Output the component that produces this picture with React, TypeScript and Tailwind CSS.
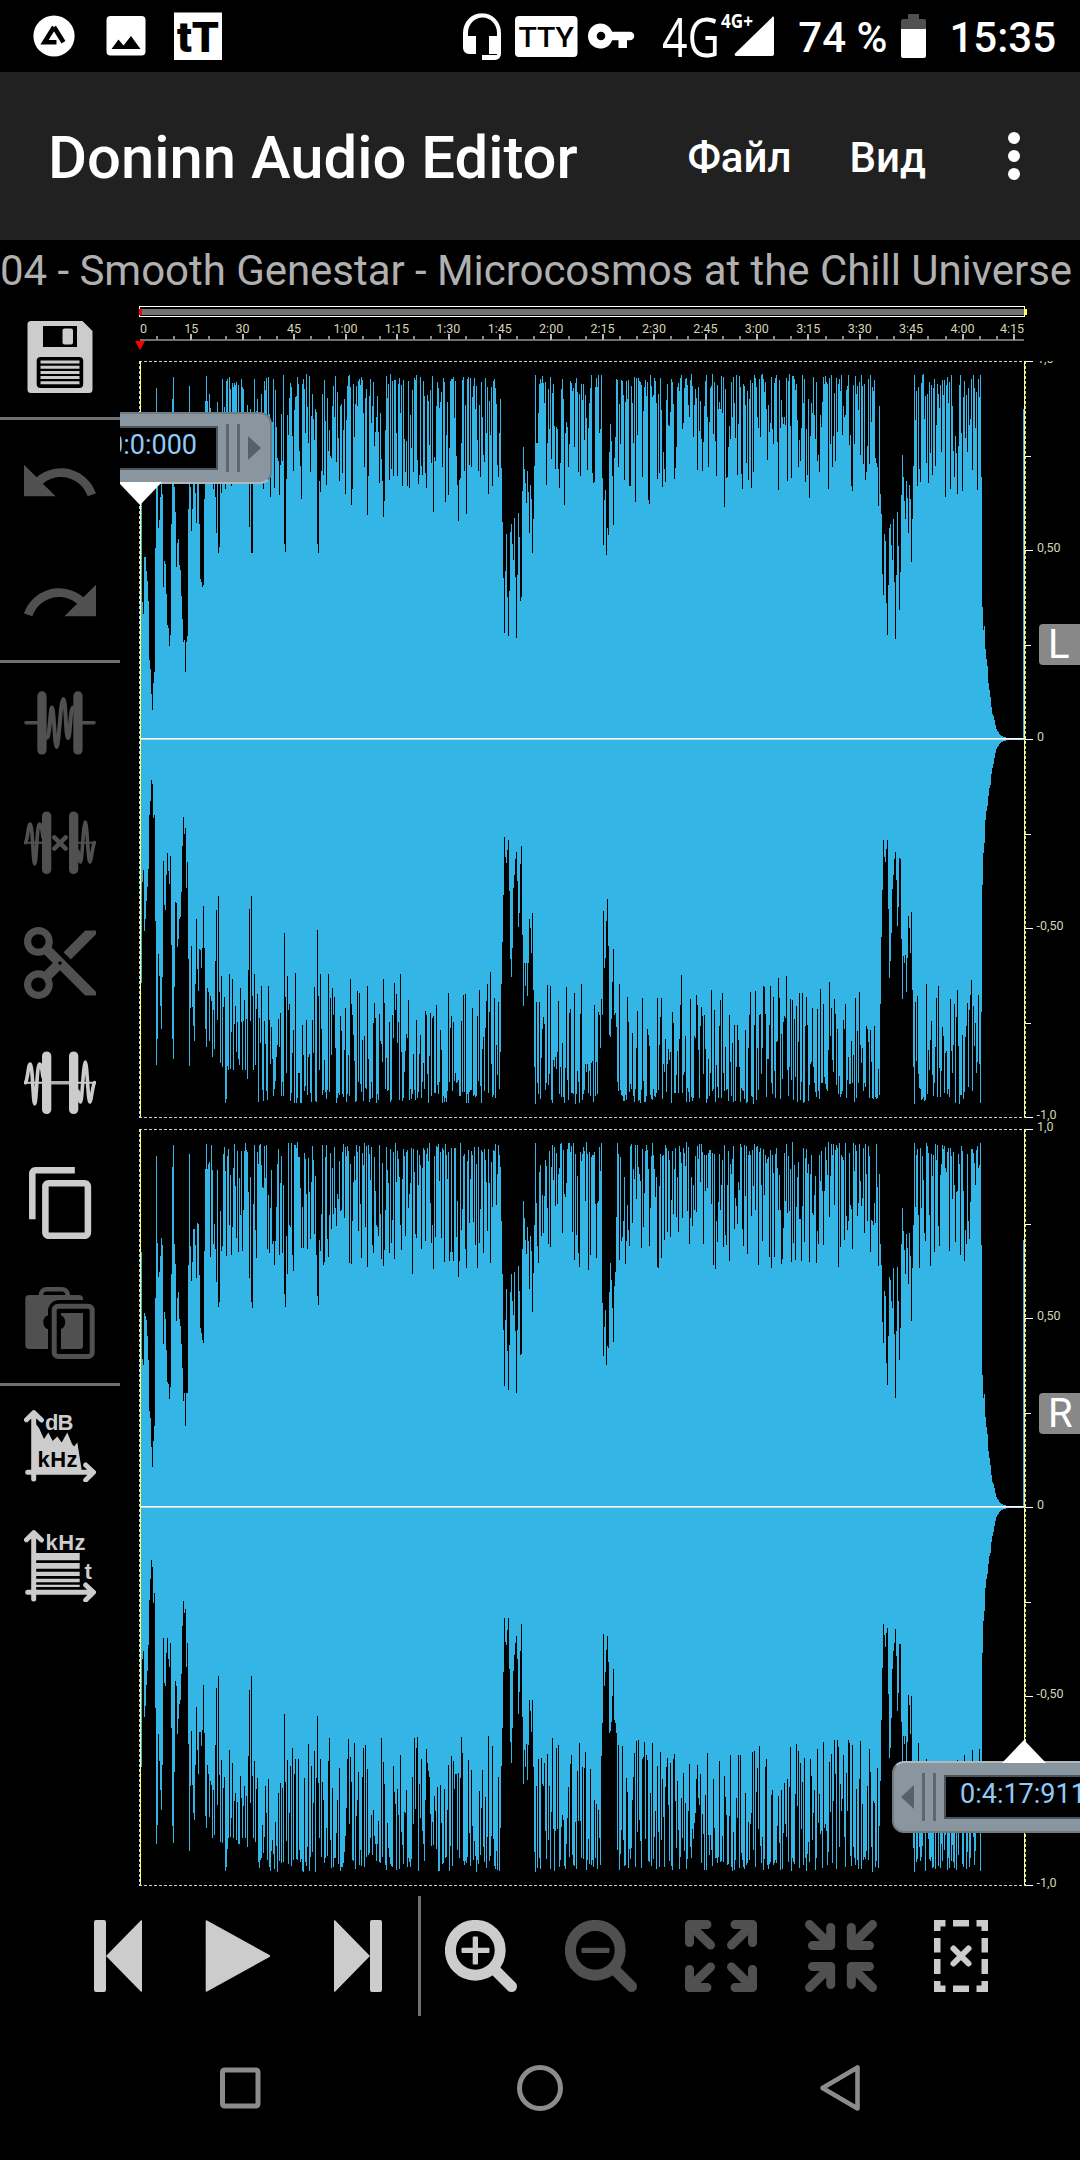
import type { ReactNode } from "react";

// One value per pixel column, starting at the given column. Values are pixels from the zero line.
type Run = [start: number, values: number[]];

const TOP_RUNS: Run[] = [
  [0, [240, 240, 137, 125, 182, 182, 168, 158, 138, 79, 70, 45, 29, 56, 67, 191, 351, 252, 211, 219, 242, 255, 245, 152, 178, 175, 145, 114, 111, 93, 104, 215, 340, 362, 252, 227, 172, 196, 200, 174, 169, 143, 120, 97, 99, 67, 97, 103, 230, 353, 252, 208, 230, 262, 262, 246, 216, 272, 272, 215, 160, 157, 152, 154, 240, 338, 363, 338, 325, 345]],
  [73, [250, 272, 242, 206, 337, 186, 192, 280, 246]],
  [109, [212, 330, 186, 186, 290]],
  [139, [244]],
  [144, [195, 187, 260]],
  [161, [240]],
  [177, [195, 186, 258, 247]],
  [211, [234]],
  [227, [224]],
  [243, [222, 238]],
  [293, [227]],
  [318, [218]],
  [326, [225]],
  [360, [340, 271, 217, 161, 106, 168, 205, 142, 103, 148, 207, 215, 195, 179, 221, 162, 101, 164, 226, 202, 138, 142, 248, 292, 270, 256, 236, 268, 247, 206, 254, 240, 186, 220, 273, 364, 296]],
  [461, [364, 261, 194, 239, 249, 184, 211, 204, 287, 315, 298, 263, 214, 281, 302]],
  [738, [233, 333, 245, 225, 165, 144, 205, 198, 136, 104, 154, 211, 215, 194, 179, 220, 157, 100, 164, 227, 193, 129, 167, 244, 284, 262, 238, 220, 258, 241, 206, 254, 240, 177, 220, 273, 364]],
  [839, [342, 364, 262, 132, 109, 113, 90, 80, 73, 56, 49, 42, 32, 25, 23, 19, 14, 10, 8, 7, 5, 4, 3, 3, 2, 2, 2, 1, 1, 1, 1, 1, 1, 1, 1, 1, 1, 1, 1, 1, 1, 1, 1, 1]],
];

const BOTTOM_RUNS: Run[] = [
  [0, [244, 244, 143, 131, 192, 180, 162, 148, 130, 76, 62, 41, 45, 79, 76, 182, 326, 300, 215, 237, 267, 290, 238, 122, 166, 171, 136, 114, 132, 145, 117, 206, 300, 320, 248, 163, 164, 208, 200, 180, 178, 153, 107, 78, 95, 89, 149, 123, 220, 327, 269, 207, 268, 287, 302, 245, 180, 230, 252, 210, 211, 229, 209, 167, 209, 290, 308, 249, 253, 302, 257, 262, 318, 271, 310, 222, 171, 281, 157, 253, 324, 237, 328, 268, 258, 364, 360, 327, 331, 235, 330, 293, 240, 331, 285, 267, 313, 283, 320, 326, 249, 283, 331, 282, 261, 331, 280, 340, 231, 170, 282, 157, 257, 331, 235, 326, 270]],
  [144, [194, 258, 334, 237]],
  [155, [234]],
  [177, [191, 257, 331, 235]],
  [188, [235]],
  [210, [240, 265]],
  [243, [240, 264]],
  [260, [235, 313]],
  [360, [313, 245, 203, 156, 98, 118, 124, 111, 101, 152, 220, 238, 209, 149, 136, 120, 113, 142, 188, 174, 125, 107, 196, 267, 224, 247, 224, 257, 224, 180, 189, 214, 174, 251, 328, 365, 263]],
  [462, [276, 172, 229, 219, 182, 160, 207, 296, 298, 280, 243, 210, 276, 274, 288, 343]],
  [740, [265, 198, 151, 101, 118, 123, 110, 101, 170, 239, 222, 194, 150, 136, 120, 113, 141, 187, 168, 119, 120, 200, 260, 217, 224, 216, 253, 219, 177, 189, 214, 173, 251, 328, 365, 263]],
  [840, [364, 273, 146, 114, 104, 81, 72, 67, 57, 49, 46, 35, 29, 25, 19, 14, 10, 8, 7, 5, 4, 3, 3, 2, 2, 2, 1, 1, 1, 1, 1, 1, 1, 1, 1, 1, 1, 1, 1, 1, 1, 1, 1, 1]],
];

const COLUMNS = 884;

function random(seed: number) {
  let s = seed;
  return () => {
    s = (s * 1664525 + 1013904223) % 4294967296;
    return s / 4294967296;
  };
}

// Loud passages are dense noise, the quiet ones come from the runs above.
function buildSide(runs: Run[], seed: number, depth: number, right?: boolean) {
  const next = random(seed);
  const out: number[] = [];
  for (let i = 0; i < COLUMNS; i++) {
    const r = next();
    const q = next();
    let v = 364 - depth * Math.pow(q, 1.4);
    if (r < 0.22) v = 350 + q * 15;
    if (r > 0.96) v = 232 + q * 40;
    out.push(v);
  }
  for (const [start, values] of runs) {
    values.forEach((v, i) => {
      let value = v;
      if (right && start < 800 && v < 330) {
        // the right channel is a bit louder in the breaks, except at 2:15
        value += start > 440 && start < 480 ? -v * 0.23 : 14;
        value += (next() - 0.5) * 12;
      }
      out[start + i] = value;
    });
  }
  return out.map(Math.round);
}

function wavePath(center: number, top: number[], bottom: number[]) {
  let d = `M140 ${center}`;
  top.forEach((v, i) => {
    d += `V${center - v}H${141 + i}`;
  });
  for (let i = COLUMNS - 1; i >= 0; i--) {
    d += `V${center + bottom[i]}H${140 + i}`;
  }
  return d + "Z";
}

const CHANNELS = [
  { name: "L", center: 739, d: wavePath(739, buildSide(TOP_RUNS, 11, 115), buildSide(BOTTOM_RUNS, 29, 120)) },
  { name: "R", center: 1507, d: wavePath(1507, buildSide(TOP_RUNS, 57, 125, true), buildSide(BOTTOM_RUNS, 83, 135, true)) },
];

const LIGHT = "#cccccc";
const DIM = "#505050";

function ToolButton({ children, dim }: { children: ReactNode; dim?: boolean }) {
  return (
    <button className="flex h-[120px] w-[120px] shrink-0 items-center justify-center">
      <svg width="72" height="72" viewBox="0 0 72 72" color={dim ? DIM : LIGHT} fill="currentColor">
        {children}
      </svg>
    </button>
  );
}

function Stroke({ d, w }: { d: string; w: number }) {
  return (
    <path d={d} fill="none" stroke="currentColor" strokeWidth={w} strokeLinecap="round" strokeLinejoin="round" />
  );
}

function SideWaves() {
  return (
    <>
      <Stroke w={3.6} d="M1.500 35.700C4 32 4 17 6.300 17S9 57 10.700 57S13 17 15.300 17S18 24 19 30" />
      <Stroke w={3.6} d="M54 44C55 50 55.500 55 56.700 55S59.500 15 61.300 15S64 55 65.700 55S68.500 38 70.500 35.700" />
      <rect x="18" y="4.500" width="9.300" height="62.500" rx="4.600" />
      <rect x="45" y="4.500" width="9.300" height="62.500" rx="4.600" />
      <path d="M0 34.700h19v2H0zM53 34.700h19v2H53z" />
    </>
  );
}

function Axes() {
  return (
    <>
      <Stroke w={5} d="M9.700 3.500V69M2.500 9.700L9.700 2.700L17.500 10" />
      <Stroke w={5} d="M3.700 62.300H69M61.700 55L69.500 62.300L61.700 70" />
    </>
  );
}

function SideToolbar() {
  return (
    <div className="flex w-[120px] shrink-0 flex-col">
      <ToolButton>
        <path d="M7 0H58.500L68.500 10V68.500a3.500 3.500 0 0 1-3.500 3.500H7a3.500 3.500 0 0 1-3.500-3.500V3.500A3.500 3.500 0 0 1 7 0z" />
        <rect x="19" y="5" width="34" height="21" fill="#000" />
        <rect x="38.500" y="7.500" width="10.500" height="16" rx="2" />
        <rect x="12.700" y="36" width="46.500" height="31" rx="4" fill="#000" />
        <path d="M16.500 39.500h39v3h-39zM16.500 44.700h39v3h-39zM16.500 50h39v3h-39zM16.500 55h39v3h-39zM16.500 60.300h39v3h-39z" />
      </ToolButton>
      <div className="h-[3px] bg-[#707070]" />
      <ToolButton dim>
        <path
          transform="translate(-7.030 -3.900) scale(3.516)"
          d="M12.500 8c-2.650 0-5.050.990-6.900 2.600L2 7v9h9l-3.620-3.620c1.390-1.160 3.160-1.880 5.120-1.880 3.540 0 6.550 2.310 7.600 5.500l2.370-.780C21.080 11.030 17.150 8 12.500 8z"
        />
      </ToolButton>
      <ToolButton dim>
        <path
          transform="translate(79.030 -3.900) scale(-3.516 3.516)"
          d="M12.500 8c-2.650 0-5.050.990-6.900 2.600L2 7v9h9l-3.620-3.620c1.390-1.160 3.160-1.880 5.120-1.880 3.540 0 6.550 2.310 7.600 5.500l2.370-.780C21.080 11.030 17.150 8 12.500 8z"
        />
      </ToolButton>
      <div className="h-[3px] bg-[#707070]" />
      <ToolButton dim>
        <Stroke w={3.6} d="M2 35.700H14M58 35.700H70" />
        <rect x="13.300" y="4.300" width="9.300" height="63.300" rx="4.600" />
        <rect x="49.300" y="4.300" width="9.300" height="63.300" rx="4.600" />
        <Stroke w={4} d="M22.500 51C26 52 26 20.500 28 20.500S30.500 60 32.700 60S36.500 12 39.300 12S41.500 51 44 51S46 20.500 49 20.500" />
      </ToolButton>
      <ToolButton dim>
        <SideWaves />
        <Stroke w={4.5} d="M30.300 30.300L41.700 41.700M41.700 30.300L30.300 41.700" />
      </ToolButton>
      <ToolButton dim>
        <path
          transform="translate(-7.200 -7.200) scale(3.600)"
          d="M9.640 7.640c.230-.500.360-1.050.360-1.640 0-2.210-1.790-4-4-4S2 3.790 2 6s1.790 4 4 4c.590 0 1.140-.130 1.640-.360L10 12l-2.360 2.360C7.140 14.130 6.590 14 6 14c-2.210 0-4 1.790-4 4s1.790 4 4 4 4-1.790 4-4c0-.590-.130-1.140-.360-1.640L12 14l7 7h3v-1L9.640 7.640zM6 8c-1.100 0-2-.890-2-2s.900-2 2-2 2 .890 2 2-.900 2-2 2zm0 12c-1.100 0-2-.890-2-2s.900-2 2-2 2 .890 2 2-.900 2-2 2zm6-7.500c-.280 0-.500-.220-.500-.500s.220-.500.500-.500.500.220.500.500-.220.500-.500.500zM19 3l-6 6 2 2 7-7V3z"
        />
      </ToolButton>
      <ToolButton>
        <SideWaves />
        <rect x="27" y="34" width="18" height="3.500" fill="#b0b0a8" />
      </ToolButton>
      <ToolButton>
        <path
          transform="translate(-1.500 -3.270) scale(3.270)"
          d="M16 1H4c-1.100 0-2 .900-2 2v14h2V3h12V1zm3 4H8c-1.100 0-2 .900-2 2v14c0 1.100.900 2 2 2h11c1.100 0 2-.900 2-2V7c0-1.100-.900-2-2-2zm0 16H8V7h11v14z"
        />
      </ToolButton>
      <ToolButton dim>
        <rect x="1.300" y="8" width="57.700" height="54" rx="4" />
        <path d="M17 10V8a5.700 5.700 0 0 1 5.700-5.700H38A5.700 5.700 0 0 1 43.700 8v2" fill="none" stroke="currentColor" strokeWidth="4.600" />
        <path d="M24 72V24a11 11 0 0 1 11-11H72V72z" fill="#000" />
        <rect x="30.200" y="19.200" width="38" height="50.300" rx="4" fill="none" stroke="currentColor" strokeWidth="5" />
        <path d="M37 26h22v33a3 3 0 0 1-3 3H37z" />
        <path d="M24 28.500a4.500 6.500 0 0 0 0 13.500zM36.500 28.500a4.500 6.500 0 0 1 0 13.500z" fill="#000" />
      </ToolButton>
      <div className="h-[3px] bg-[#707070]" />
      <ToolButton>
        <path d="M11 13L15 18L20 29L24.300 22.500L28.700 31L33.300 26.500L37.700 32.500L43.300 22.500L48 34L50 36.500L53.300 32.500L58 62H11z" />
        <Axes />
        <text x="21" y="19.700" fontSize="22" fontWeight="700" fontFamily="Liberation Sans" textLength="28.500">dB</text>
        <text x="13.500" y="57.300" fontSize="22" fontWeight="700" fontFamily="Liberation Sans" textLength="40" fill="#000">kHz</text>
      </ToolButton>
      <ToolButton>
        <path d="M11 23h44.700v7.300H11zM11 33h44.700v5.700H11zM11 41.700h44.700v4.300H11zM11 48.700h44.700v3.600H11zM11 54.700h44.700v2.300H11z" />
        <Axes />
        <text x="21.500" y="19.500" fontSize="22" fontWeight="700" fontFamily="Liberation Sans" textLength="40">kHz</text>
        <text x="60.500" y="49" fontSize="22" fontWeight="700" fontFamily="Liberation Sans">t</text>
      </ToolButton>
    </div>
  );
}

function timeLabel(sec: number) {
  if (sec < 60) return String(sec);
  return `${Math.floor(sec / 60)}:${String(sec % 60).padStart(2, "0")}`;
}

function TimeRuler() {
  const ticks = Array.from({ length: 52 }, (_, i) => i * 5);
  return (
    <g>
      <rect x="139.500" y="306.500" width="885" height="10" fill="none" stroke="#fff" />
      <rect x="140" y="309" width="884" height="6" fill="#707070" />
      <rect x="139" y="309" width="3" height="6" fill="#f00" />
      <rect x="1024" y="309" width="3" height="6" fill="#ffff50" />
      <rect x="140" y="339" width="884" height="2" fill="#707070" />
      {ticks.map((sec) => {
        const x = Math.round(140 + sec * 3.428);
        if (sec === 0) return null;
        return sec % 15 === 0 ? (
          <rect key={sec} x={x - 1} y="334" width="2" height="6" fill="#b8b8b8" />
        ) : (
          <rect key={sec} x={x - 1} y="336" width="2" height="4" fill="#888" />
        );
      })}
      {ticks
        .filter((sec) => sec % 15 === 0)
        .map((sec) => (
          <text
            key={sec}
            x={sec === 0 ? 143.5 : sec === 255 ? 1012 : 139.8 + sec * 3.428}
            y="332.500"
            textAnchor="middle"
            fontSize="12.500"
            fill="#d4d4b4"
          >
            {timeLabel(sec)}
          </text>
        ))}
      <path d="M135 341h10l-5 9z" fill="#f00" />
    </g>
  );
}

const LEVELS = [
  { value: 1, label: "1,0" },
  { value: 0.75 },
  { value: 0.5, label: "0,50" },
  { value: 0.25 },
  { value: 0, label: "0" },
  { value: -0.25 },
  { value: -0.5, label: "-0,50" },
  { value: -0.75 },
  { value: -1, label: "-1,0" },
];

function Channel({ center, d }: { center: number; d: string }) {
  const top = center - 378;
  const bottom = center + 378;
  return (
    <g>
      <path d={d} fill="#33b5e5" shapeRendering="crispEdges" />
      <path d={`M139 ${top + 0.5}H1025M139 ${bottom + 0.5}H1025`} stroke="#cfcfcf" strokeDasharray="3 2" />
      <path d={`M139.500 ${top}V${bottom}M1025.500 ${top}V${bottom}`} stroke="#d8d8d8" strokeDasharray="3 2" />
      <path d={`M140.500 ${top}V${bottom}M1024.500 ${top}V${bottom}`} stroke="#ffff70" />
      <rect x="141" y={center - 1} width="884" height="1" fill="#fff" />
      <rect x="141" y={center} width="884" height="1" fill="#b4e2f5" />
      {LEVELS.map(({ value, label }) => {
        const y = Math.round(center - value * 378);
        return (
          <g key={value}>
            <rect x="1025" y={y} width={label ? 8 : 6} height="1" fill="#fff" />
            {label && (
              <text x={value < 0 ? 1036.5 : 1037} y={y + 2} fontSize="12.500" fill="#d4d4b4" clipPath="url(#levels)">
                {label}
              </text>
            )}
          </g>
        );
      })}
    </g>
  );
}

function Grip() {
  return (
    <>
      <div className="h-12 w-[3px] shrink-0 bg-[#5c6770]" />
      <div className="h-12 w-[3px] shrink-0 bg-[#5c6770]" />
    </>
  );
}

function WaveArea() {
  return (
    <div className="relative w-[960px] overflow-hidden">
      <svg width="960" height="1599" viewBox="120 297 960 1599" fontFamily="Roboto">
        <clipPath id="levels">
          <rect x="1030" y="361" width="50" height="1540" />
        </clipPath>
        <TimeRuler />
        {CHANNELS.map((c) => (
          <Channel key={c.name} center={c.center} d={c.d} />
        ))}
      </svg>

      {/* Channel badges */}
      <div className="absolute top-[327px] left-[919px] flex h-[41px] w-[44px] items-center rounded bg-[#888888] pl-[9px] text-[40px] leading-none text-white">
        L
      </div>
      <div className="absolute top-[1096px] left-[919px] flex h-[41px] w-[44px] items-center rounded bg-[#888888] pl-[9px] text-[40px] leading-none text-white">
        R
      </div>

      {/* Selection start */}
      <div className="absolute top-[115px] -left-[60px] flex h-[72px] w-[212px] items-center justify-end gap-2 rounded-xl border-2 border-[#707b84] border-b-[#b0b8be] bg-[#8a969f] pr-[9px]">
        <div className="flex h-[44px] w-[157px] shrink-0 items-center justify-end border-2 border-l-0 border-[#4a545c] bg-black pr-[19px] pb-[5px] text-[27px] text-[#90caf9]">
          0:0:0:000
        </div>
        <Grip />
        <svg className="shrink-0" width="13" height="24" viewBox="0 0 13 24" fill="#56616a">
          <path d="M0 0L13 12L0 24z" />
        </svg>
      </div>
      <svg className="absolute top-[185px] -left-[2px]" width="44" height="24" viewBox="0 0 44 24" fill="#fff">
        <path d="M0 0H44L22 23z" />
      </svg>

      {/* Selection end */}
      <div className="absolute top-[1464px] left-[772px] flex h-[72px] w-[240px] items-center gap-2 rounded-xl border-2 border-[#707b84] border-t-[#b0b8be] bg-[#8a969f] pl-[7px]">
        <svg className="shrink-0" width="13" height="24" viewBox="0 0 13 24" fill="#56616a">
          <path d="M13 0L0 12L13 24z" />
        </svg>
        <Grip />
        <div className="flex h-[44px] w-[180px] shrink-0 items-center border-2 border-[#4a545c] bg-black pb-[5px] pl-[14px] text-[27px] text-[#90caf9]">
          0:4:17:911
        </div>
      </div>
      <svg className="absolute top-[1443px] left-[882px]" width="44" height="23" viewBox="0 0 44 23" fill="#fff">
        <path d="M0 23H44L22 0z" />
      </svg>
    </div>
  );
}

function StatusBar() {
  return (
    <div className="flex h-[72px] items-center bg-black">
      <svg width="240" height="72" viewBox="0 0 240 72" fill="#fff">
        <circle cx="54" cy="36" r="20.600" />
        <path d="M54 27L44.500 42.300H56.500M54 27L63.500 42.300" fill="none" stroke="#000" strokeWidth="4.600" />
        <rect x="106.500" y="16" width="39" height="39.500" rx="4" />
        <path d="M111.500 49L118.500 39.500L123.500 45.500L131 36L140.500 49z" fill="#000" />
        <rect x="174" y="12.500" width="48" height="47.500" />
        <text x="177" y="51.500" fontSize="42" fontWeight="900" fontFamily="Roboto" textLength="42" lengthAdjust="spacingAndGlyphs" fill="#000">tT</text>
      </svg>
      <svg className="ml-auto" width="320" height="72" viewBox="460 0 320 72" fill="#fff">
        <path d="M481.500 13a19.500 20 0 0 0-19.500 20v15a6 6 0 0 0 6 6h7V36h-8v-3a14.500 15.500 0 0 1 29 0v3h-8v18h8v1h-15v5h13a6 6 0 0 0 6-6V33a19.500 20 0 0 0-19.500-20z" />
        <rect x="514" y="16" width="62.500" height="41" rx="4" />
        <text x="517.500" y="47" fontSize="28" fontWeight="500" fontFamily="Roboto" textLength="55.500" lengthAdjust="spacingAndGlyphs" fill="#000">TTY</text>
        <path d="M611.200 31.800a12.500 12.500 0 1 0 0 8.500h6.300v7.700h8.500v-7.700h3a4.200 4.200 0 0 0 0-8.500zM600 40.300a4.300 4.300 0 1 1 0-8.600a4.300 4.300 0 0 1 0 8.600z" />
        <text x="661" y="57" fontSize="55" fontFamily="Open Sans" textLength="58" lengthAdjust="spacingAndGlyphs">4G</text>
        <text x="720" y="28" fontSize="19" fontWeight="700" fontFamily="Open Sans" textLength="32" lengthAdjust="spacingAndGlyphs">4G+</text>
        <path d="M771 17.500a1 1 0 0 1 2 0V54a2 2 0 0 1-2 2H735a1.500 1.500 0 0 1-1-2.500z" />
      </svg>
      <span className="ml-[17px] pt-0.5 text-[42px] font-medium whitespace-nowrap text-white">74 %</span>
      <svg className="ml-3.5" width="25" height="72" viewBox="0 0 25 72">
        <path d="M7 14h11v5h5a2 2 0 0 1 2 2v8H0V21a2 2 0 0 1 2-2h5z" fill="#505050" />
        <path d="M0 29h25v27a2 2 0 0 1-2 2H2a2 2 0 0 1-2-2z" fill="#fff" />
      </svg>
      <span className="mr-6 ml-[23px] pt-0.5 text-[42px] font-medium text-white">15:35</span>
    </div>
  );
}

function AppBar() {
  return (
    <div className="flex h-[168px] items-center bg-[#212121] text-white">
      <h1 className="ml-12 pt-[5px] text-[59.800px] leading-none font-medium whitespace-nowrap">Doninn Audio Editor</h1>
      <span className="ml-auto pt-0.5 text-[42px] font-medium">Файл</span>
      <span className="ml-[58px] pt-0.5 text-[42px] font-medium">Вид</span>
      <div className="mr-[60px] ml-[82px] flex flex-col gap-1.5">
        <div className="h-3 w-3 rounded-full bg-white" />
        <div className="h-3 w-3 rounded-full bg-white" />
        <div className="h-3 w-3 rounded-full bg-white" />
      </div>
    </div>
  );
}

const OUT_ARROW = "M4.500 22.500V4.500H22M4.500 4.500L25.500 25";
const IN_ARROW = "M4.500 4.500L25.700 25.500M25.700 7.500V25.500H7.500";

function FourWay({ d }: { d: string }) {
  return (
    <>
      <Stroke w={9} d={d} />
      <g transform="translate(72 0) scale(-1 1)">
        <Stroke w={9} d={d} />
      </g>
      <g transform="translate(0 72) scale(1 -1)">
        <Stroke w={9} d={d} />
      </g>
      <g transform="translate(72 72) scale(-1 -1)">
        <Stroke w={9} d={d} />
      </g>
    </>
  );
}

function Magnifier({ plus }: { plus?: boolean }) {
  return (
    <>
      <circle cx="30.300" cy="30.300" r="24.900" fill="none" stroke="currentColor" strokeWidth="11" />
      <Stroke w={11} d="M51 51L66.500 66.500" />
      <rect x="16.500" y="27.700" width="28" height="5.300" rx="1" />
      {plus && <rect x="27.700" y="16.500" width="5.300" height="28" rx="1" />}
    </>
  );
}

function BottomToolbar() {
  return (
    <div className="flex h-[120px] pl-[58px]">
      <ToolButton>
        <rect x="12" width="12" height="72" rx="2" />
        <path d="M24 36L59 .300Q60 0 60 1V71Q60 72 59 71.700z" />
      </ToolButton>
      <ToolButton>
        <path d="M3.700 1Q3.700 0 5 .500L67.500 35Q69 36 67.500 37L5 71.500Q3.700 72 3.700 71z" />
      </ToolButton>
      <ToolButton>
        <path d="M48 36L13 .300Q12 0 12 1V71Q12 72 13 71.700z" />
        <rect x="48" width="12" height="72" rx="2" />
      </ToolButton>
      <div className="w-[3px] bg-[#707070]" />
      <ToolButton>
        <Magnifier plus />
      </ToolButton>
      <ToolButton dim>
        <Magnifier />
      </ToolButton>
      <ToolButton dim>
        <FourWay d={OUT_ARROW} />
      </ToolButton>
      <ToolButton dim>
        <FourWay d={IN_ARROW} />
      </ToolButton>
      <ToolButton>
        <path d="M9 0h11.500v6.500h-5V11H9zM28 0h16v6.500H28zM51.500 0H63v11h-6.500V6.500h-5zM9 18h6.500v14.500H9zM56.500 18H63v14.500h-6.500zM9 39h6.500v15H9zM56.500 39H63v15h-6.500zM9 61h6.500v4.500h5V72H9zM28 65.500h16V72H28zM56.500 61H63v11H51.500v-6.500h5z" />
        <Stroke w={6} d="M28.500 28.500L43.500 43.500M43.500 28.500L28.500 43.500" />
      </ToolButton>
    </div>
  );
}

function NavBar() {
  return (
    <div className="flex h-[144px] items-center justify-between px-[216px]">
      <svg width="48" height="48" viewBox="0 0 48 48" fill="none" stroke="#8c8c8c" strokeWidth="5">
        <rect x="6.500" y="6" width="35.500" height="36" rx="2" />
      </svg>
      <svg width="48" height="48" viewBox="0 0 48 48" fill="none" stroke="#8c8c8c" strokeWidth="5">
        <circle cx="24" cy="24" r="20.500" />
      </svg>
      <svg width="48" height="48" viewBox="0 0 48 48" fill="none" stroke="#8c8c8c" strokeWidth="4.600" strokeLinejoin="round">
        <path d="M6.500 24L41.500 3.500V44.500z" />
      </svg>
    </div>
  );
}

export default function App() {
  return (
    <div className="flex h-[2160px] w-[1080px] flex-col overflow-hidden bg-black font-['Roboto',sans-serif]">
      <StatusBar />
      <AppBar />
      <div className="h-[57px] overflow-hidden pt-1 text-[42px] leading-[54px] tracking-[-0.04px] whitespace-nowrap text-[#b0b0b0]">
        04 - Smooth Genestar - Microcosmos at the Chill Universe
      </div>
      <div className="flex h-[1599px]">
        <SideToolbar />
        <WaveArea />
      </div>
      <BottomToolbar />
      <NavBar />
    </div>
  );
}
